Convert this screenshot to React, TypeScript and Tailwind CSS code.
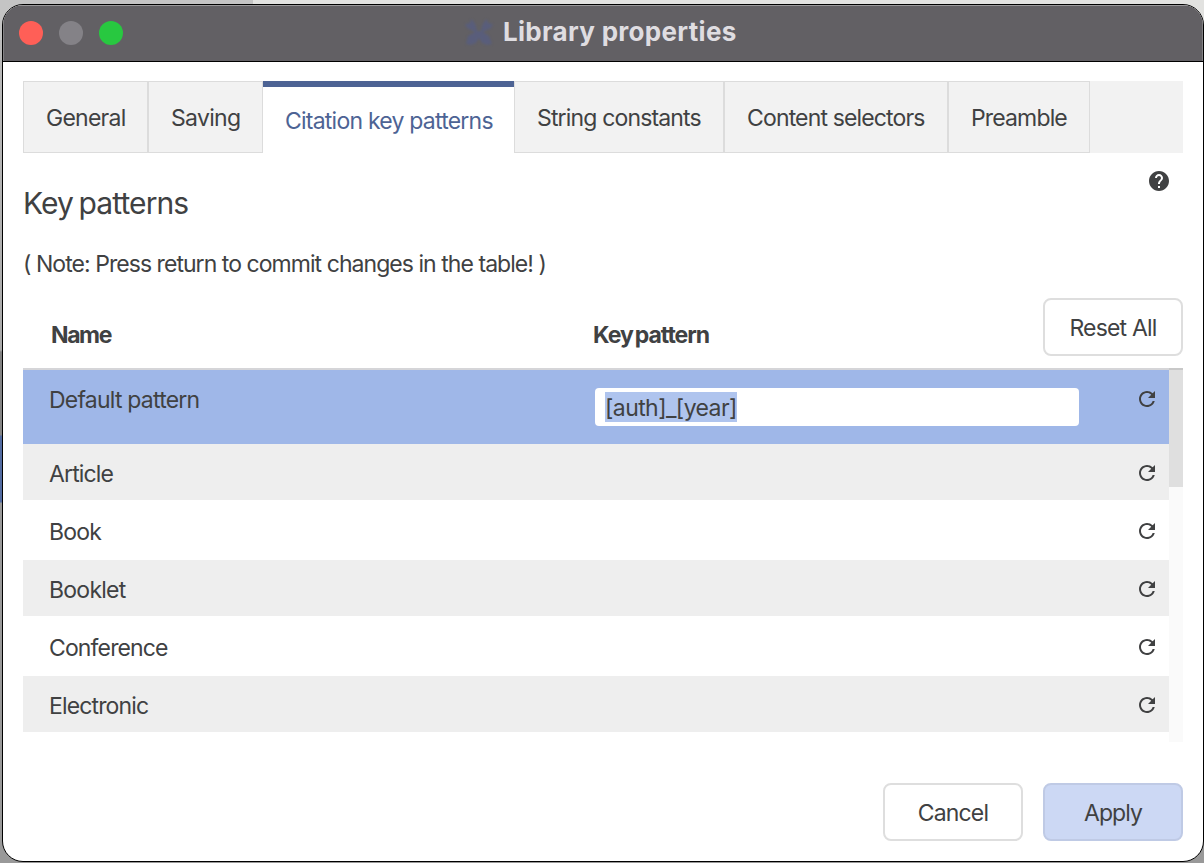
import { MdHelp, MdRefresh } from "react-icons/md";

const tabs = [
  { label: "General", box: "w-[125px] pl-[22px] border-l border-r", tracking: "tracking-[-0.75px]" },
  { label: "Saving", box: "w-[115px] pl-[22px] border-l border-r", tracking: "tracking-[-0.7px]" },
  { label: "Citation key patterns", active: true, box: "w-[251px] pl-[22px]", tracking: "tracking-[-0.77px]" },
  { label: "String constants", box: "w-[210px] pl-[22px] border-l border-r", tracking: "tracking-[-0.84px]" },
  { label: "Content selectors", box: "w-[224px] pl-[22px] border-l border-r", tracking: "tracking-[-0.85px]" },
  { label: "Preamble", box: "w-[142px] pl-[22px] border-l border-r", tracking: "tracking-[-0.85px]" },
];

const rows = [
  { name: "Article", tracking: "tracking-[-0.86px]" },
  { name: "Book", tracking: "tracking-[-0.8px]" },
  { name: "Booklet", tracking: "tracking-[-0.75px]" },
  { name: "Conference", tracking: "tracking-[-0.86px]" },
  { name: "Electronic", tracking: "tracking-[-0.86px]" },
];

function AppMark() {
  return (
    <svg viewBox="0 0 30 30" className="h-[30px] w-[30px] blur-[1px]" fill="#555d85">
      <path
        d="M7 2 10 5 12 9 13 14H17L18 9 20 5 23 2 24 6 29 7 27 11 19 15 25 19 28 27 23 28 18 26 15 21 12 26 7 28 2 27 4 19 11 15 3 11 1 7 6 6Z"
        opacity=".7"
      />
    </svg>
  );
}

function TitleBar() {
  return (
    <header className="flex h-[57px] shrink-0 items-start border-b border-black bg-[#626064] shadow-[inset_0_1px_0_#99989a,inset_1px_0_0_#838285,inset_-1px_0_0_#838285]">
      <div className="mt-4 ml-4 flex gap-4">
        <span className="size-6 rounded-full bg-[#ff5f57]" />
        <span className="size-6 rounded-full bg-[#848287]" />
        <span className="size-6 rounded-full bg-[#28c840]" />
      </div>
      <div className="mt-3 ml-[341px] flex items-center gap-[9px]">
        <AppMark />
        <h1 className="text-[26px] leading-[30px] font-bold tracking-[0.3px] whitespace-nowrap text-[#dfdde1]">
          Library properties
        </h1>
      </div>
    </header>
  );
}

function Tabs() {
  return (
    <nav className="flex h-[72px] shrink-0 bg-[#f2f2f2]">
      {tabs.map((t) => (
        <button
          key={t.label}
          className={`${t.box} ${t.tracking} flex shrink-0 items-center pt-[2px] whitespace-nowrap ${
            t.active ? "border-t-[6px] border-[#4d6394] bg-white text-[#4d6394]" : "border-y border-[#dcdcdc]"
          }`}
        >
          {t.label}
        </button>
      ))}
    </nav>
  );
}

function PatternTable() {
  return (
    <div className="flex h-[374px] shrink-0">
      <div className="w-[1146px] overflow-hidden">
        <div className="flex h-[76px] items-start border-t-2 border-[#d5d5d8] bg-[#9fb7e8] pr-[10px] pl-[26px]">
          <span className="mt-[15px] w-[546px] leading-[30px] tracking-[-0.78px]">Default pattern</span>
          <div className="mt-[18px] flex h-[38px] w-[484px] items-center rounded-[4px] bg-white pl-[10px]">
            <span className="flex h-[30px] w-[132px] items-center bg-[#afc4ee] pt-[2px] leading-[30px] tracking-[-0.58px]">
              [auth]_[year]
            </span>
          </div>
          <MdRefresh className="mt-[17px] ml-auto size-6" />
        </div>
        {rows.map((r, i) => (
          <div
            key={r.name}
            className={`flex h-[58px] items-start pt-[15px] pr-[10px] pl-[26px] ${
              i % 2 === 0 ? "border-b-2 border-white bg-[#eeeeee]" : "bg-white"
            } ${r.tracking}`}
          >
            <span className="leading-[30px]">{r.name}</span>
            <MdRefresh className="mt-[2px] ml-auto size-6" />
          </div>
        ))}
      </div>
      <div className="w-[14px] bg-[#fafafa]">
        <div className="h-[119px] border-t-2 border-[#c8c8c8] bg-[#dfdfdf]" />
      </div>
    </div>
  );
}

export default function App() {
  return (
    <div className="flex h-[863px] w-[1204px] overflow-hidden bg-[linear-gradient(90deg,#c4c4c4_253px,#e2e2e0_253px)] bg-[length:100%_40px] bg-no-repeat font-['Inter',sans-serif] text-[23px] text-[#404142]">
      <div className="flex h-full w-full bg-[linear-gradient(180deg,transparent_40px,#bababa_40px,#aaa_350px,#818181_352px,#858585_435px,#526ba1_436px,#526ba1_502px,#999_503px,#999_100%)] pt-1 pl-[2px]">
        <div className="flex h-[858px] w-[1202px] flex-col overflow-hidden rounded-[21px] border border-black bg-white">
          <TitleBar />
          <main className="flex flex-1 flex-col pt-[19px] pr-5 pl-5">
            <Tabs />
            <div className="flex h-[145px] shrink-0 justify-between">
              <div>
                <h2 className="mt-[31px] text-[30px] leading-[38px] tracking-[-0.9px] [word-spacing:-2px]">Key patterns</h2>
                <p className="mt-[27px] leading-[30px] tracking-[-0.95px] whitespace-pre">
                  ( Note: Press return to commit changes in the table! )
                </p>
              </div>
              <MdHelp className="mt-4 mr-3 size-6" />
            </div>
            <div className="flex h-[70px] shrink-0 items-start">
              <span className="mt-[22px] ml-[28px] w-[542px] leading-[30px] font-bold tracking-[-1.4px]">Name</span>
              <span className="mt-[22px] leading-[30px] font-bold tracking-[-1px] [word-spacing:-2.5px]">Key pattern</span>
              <button className="ml-auto h-[58px] w-[140px] rounded-[8px] border-2 border-[#dedede] bg-white pt-[2px] tracking-[-0.8px]">
                Reset All
              </button>
            </div>
            <PatternTable />
            <div className="mt-[41px] flex justify-end gap-5">
              <button className="h-[58px] w-[140px] rounded-[8px] border-2 border-[#dedede] bg-white pt-[2px] tracking-[-0.85px]">
                Cancel
              </button>
              <button className="h-[58px] w-[140px] rounded-[8px] border-2 border-[#bfcae5] bg-[#ccd8f4] pt-[2px] tracking-[-0.95px]">
                Apply
              </button>
            </div>
          </main>
        </div>
      </div>
    </div>
  );
}
